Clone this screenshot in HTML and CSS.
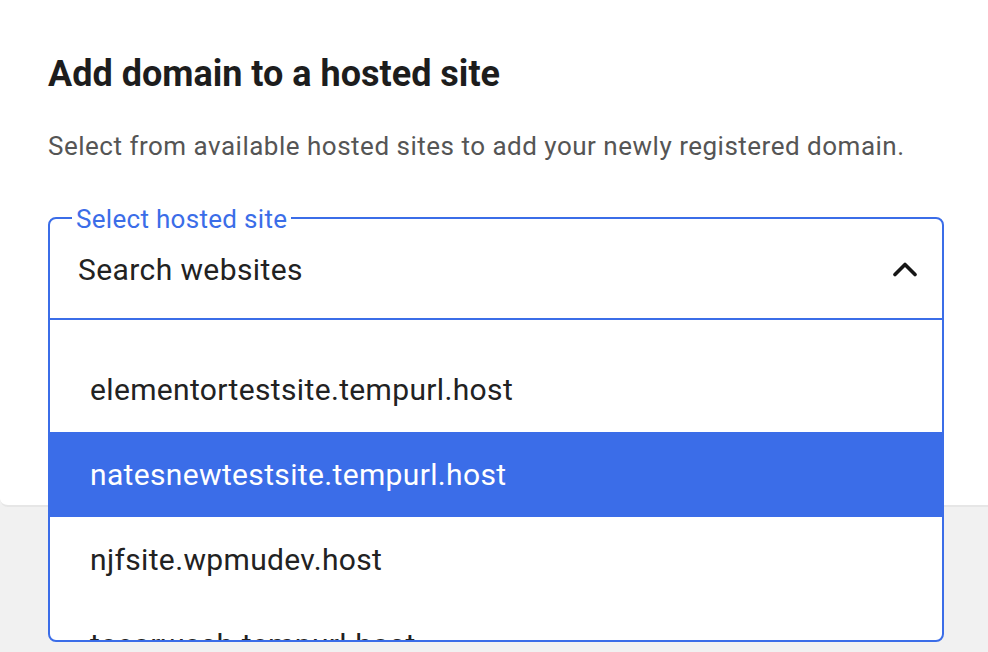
FILE: index.html
```html
<!DOCTYPE html>
<html>
<head>
<meta charset="utf-8">
<link rel="stylesheet" href="styles.css">
</head>
<body>
<div class="page">
  <div class="card">
    <h1 class="title">Add domain to a hosted site</h1>
    <p class="subtitle">Select from available hosted sites to add your newly registered domain.</p>
    <div class="field">
      <span class="field-label">Select hosted site</span>
      <div class="input-row">
        <span class="input-text">Search websites</span>
        <svg class="chevron" width="24" height="15" viewBox="0 0 24 15"><path d="M2 12.5 L12 2.5 L22 12.5" fill="none" stroke="#161616" stroke-width="3.6" stroke-linecap="round" stroke-linejoin="round"/></svg>
      </div>
      <ul class="menu">
        <li class="option">elementortestsite.tempurl.host</li>
        <li class="option selected">natesnewtestsite.tempurl.host</li>
        <li class="option">njfsite.wpmudev.host</li>
        <li class="option">tacorwash.tempurl.host</li>
      </ul>
    </div>
  </div>
  <div class="footer"></div>
</div>
</body>
</html>
```
FILE: styles.css
```css
html, body {
  margin: 0;
  padding: 0;
  background: #f1f1f1;
  font-family: Roboto, "Liberation Sans", sans-serif;
}
.page {
  width: 988px;
  height: 652px;
  overflow: hidden;
  position: relative;
}
.card {
  background: #ffffff;
  height: 507px;
  border-bottom: 2px solid #e6e6e6;
  border-bottom-left-radius: 8px;
  box-sizing: border-box;
  padding: 52px 0 0 48px;
  position: relative;
}
.title {
  margin: 0;
  font-size: 36px;
  font-weight: 700;
  color: #1d1d1d;
  line-height: 44px;
}
.subtitle {
  margin: 34px 0 0 0;
  font-size: 26px;
  color: #555555;
  line-height: 32px;
  letter-spacing: 0.5px;
}
.field {
  position: absolute;
  left: 48px;
  top: 217px;
  width: 896px;
  height: 425px;
  box-sizing: border-box;
  border: 2px solid #3b6de8;
  border-radius: 8px;
  background: #ffffff;
  display: flex;
  flex-direction: column;
  z-index: 2;
}
.field-label {
  position: absolute;
  left: 22px;
  top: -15px;
  padding: 0 4px;
  background: #ffffff;
  color: #3b6de8;
  font-size: 26px;
  line-height: 30px;
  letter-spacing: 0.3px;
}
.input-row {
  height: 101px;
  flex: none;
  box-sizing: border-box;
  border-bottom: 2px solid #3b6de8;
  display: flex;
  align-items: center;
  justify-content: space-between;
  padding: 0 25px 0 28px;
}
.input-text {
  font-size: 30px;
  color: #222222;
  letter-spacing: 0.4px;
  margin-top: 2px;
}
.chevron {
  display: block;
  margin-top: 2px;
}
.menu {
  list-style: none;
  margin: 0;
  padding: 27px 0 0 0;
  flex: 1;
  overflow: hidden;
  border-radius: 0 0 6px 6px;
}
.option {
  height: 85px;
  display: flex;
  align-items: center;
  padding-left: 40px;
  font-size: 30px;
  color: #222222;
  letter-spacing: 0.35px;
}
.option.selected {
  background: #3b6de8;
  color: #ffffff;
}
.footer {
  height: 145px;
}
```
